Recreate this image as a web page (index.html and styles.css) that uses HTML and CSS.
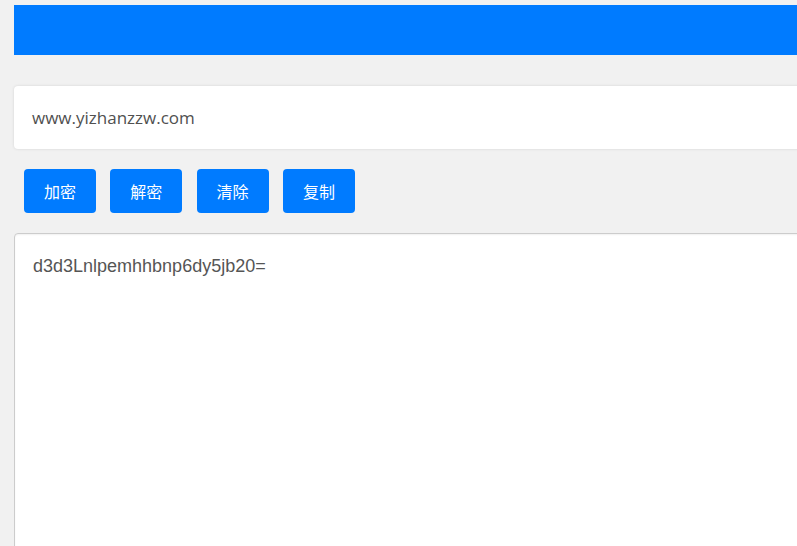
FILE: index.html
```html
<!DOCTYPE html>
<html lang="zh">
<head>
<meta charset="utf-8">
<link rel="stylesheet" href="styles.css">
</head>
<body>
<div class="page">
  <div class="topbar"></div>
  <div class="input-box">www.yizhanzzw.com</div>
  <div class="actions">
    <button class="btn">加密</button>
    <button class="btn">解密</button>
    <button class="btn">清除</button>
    <button class="btn">复制</button>
  </div>
  <div class="output">d3d3Lnlpemhhbnp6dy5jb20=</div>
</div>
</body>
</html>
```
FILE: styles.css
```css
html, body {
  margin: 0;
  padding: 0;
  overflow: hidden;
  background: #f1f1f1;
}
.page {
  width: 1000px;
  padding: 5px 0 0 14px;
  display: flex;
  flex-direction: column;
}
.topbar {
  height: 50px;
  background: #007bff;
}
.input-box {
  margin-top: 31px;
  height: 63px;
  box-sizing: border-box;
  background: #fff;
  border-radius: 4px;
  box-shadow: 0 0 3px rgba(0,0,0,0.12);
  padding: 0 18px;
  display: flex;
  align-items: center;
  font-family: "Open Sans", "Noto Sans CJK SC", sans-serif;
  font-size: 17px;
  color: #505050;
}
.actions {
  margin-top: 20px;
  padding-left: 10px;
  display: flex;
  gap: 14.3px;
}
.btn {
  width: 72px;
  height: 44px;
  border: none;
  border-radius: 4px;
  background: #007bff;
  color: #fff;
  font-family: "Noto Sans CJK SC", sans-serif;
  font-size: 16px;
  padding: 0;
}
.output {
  margin-top: 20px;
  height: 400px;
  background: #fff;
  border: 1px solid #ccc;
  border-radius: 4px;
  box-shadow: inset 0 1px 2px rgba(0,0,0,0.06);
  padding: 20px 18px;
  font-family: "Liberation Sans", Arial, sans-serif;
  font-size: 18px;
  line-height: 24px;
  color: #555;
}
```
